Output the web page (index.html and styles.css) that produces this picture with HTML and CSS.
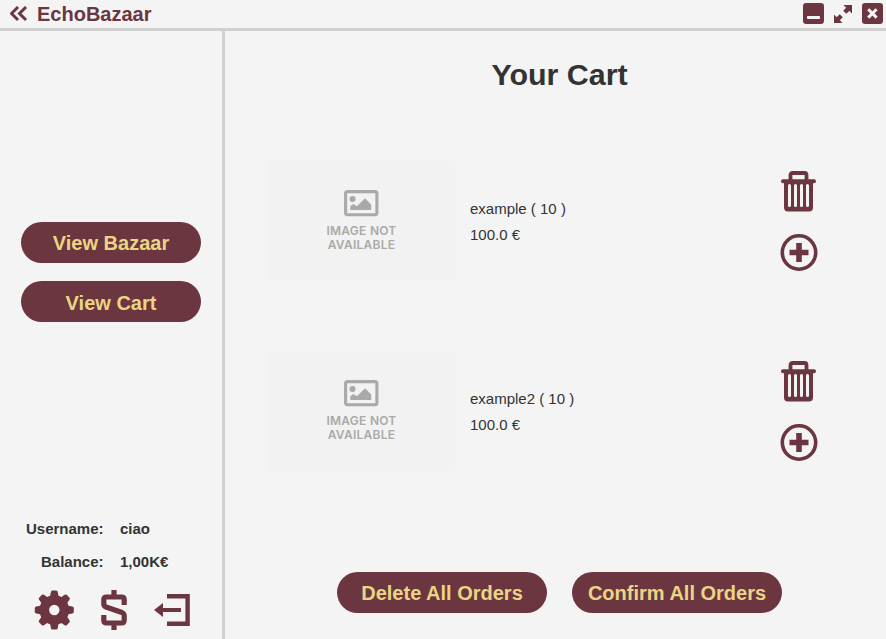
FILE: index.html
```html
<!DOCTYPE html>
<html lang="en">
<head>
<meta charset="utf-8">
<title>EchoBazaar</title>
<link rel="stylesheet" href="styles.css">
</head>
<body>
<svg width="0" height="0" class="defs">
  <symbol id="trash" viewBox="0 0 36 41">
    <path d="M9.5 9V4Q9.5 2 11.5 2H23.5Q25.5 2 25.5 4V9" fill="none" stroke="currentColor" stroke-width="3.8"/>
    <path d="M2 8.2H33Q35 8.2 35 10.2T33 12.2H32V36.5Q32 40.5 28 40.5H7Q3 40.5 3 36.5V12.2H2Q0 12.2 0 10.2T2 8.2Z" fill="currentColor"/>
    <path d="M8.5 14.5V34.5M14.5 14.5V34.5M20.5 14.5V34.5M26.5 14.5V34.5" stroke="#f4f4f4" stroke-width="3" stroke-linecap="round"/>
  </symbol>
  <symbol id="plus" viewBox="0 0 38 38">
    <circle cx="19" cy="18.5" r="16.7" fill="none" stroke="currentColor" stroke-width="3.6"/>
    <path d="M9.5 18.5H28.5M19 9V28" stroke="currentColor" stroke-width="5.6"/>
  </symbol>
  <symbol id="no-image" viewBox="0 0 35 27">
    <rect x="1.6" y="1.6" width="31.3" height="23.2" rx="2" fill="none" stroke="#a9a9a9" stroke-width="3.1"/>
    <circle cx="8.5" cy="9" r="3" fill="#a9a9a9"/>
    <path d="M6.3 20V16.3L9.3 14L13 16.3L21 8.3L27.2 14.5V20Z" fill="#a9a9a9"/>
  </symbol>
</svg>
<header class="topbar">
  <svg class="back" width="18" height="16" viewBox="0 0 18 16"><path d="M8 1L1.5 7.5L8 14M16 1L9.5 7.5L16 14" fill="none" stroke="currentColor" stroke-width="3"/></svg>
  <span class="brand">EchoBazaar</span>
  <div class="window-controls">
    <svg width="21" height="21" viewBox="0 0 21 21"><rect width="21" height="21" rx="3.2" fill="currentColor"/><rect x="4" y="13" width="13" height="3" rx=".7" fill="#f4f4f4"/></svg>
    <svg width="18" height="18" viewBox="0 0 18 18"><path d="M9.5 0H18V8.5L15.3 5.8L12.3 8.8L9.2 5.7L12.2 2.7ZM0 9.5L2.7 12.2L5.7 9.2L8.8 12.3L5.8 15.3L8.5 18H0Z" fill="currentColor"/></svg>
    <svg width="21" height="21" viewBox="0 0 21 21"><rect width="21" height="21" rx="3.2" fill="currentColor"/><path d="M6.2 6.2L14.6 14.6M14.6 6.2L6.2 14.6" stroke="#f4f4f4" stroke-width="3"/></svg>
  </div>
</header>
<div class="layout">
  <aside class="sidebar">
    <nav class="menu">
      <button class="btn">View Bazaar</button>
      <button class="btn">View Cart</button>
    </nav>
    <dl class="account">
      <dt>Username:</dt><dd>ciao</dd>
      <dt>Balance:</dt><dd>1,00K€</dd>
    </dl>
    <div class="tools">
      <svg width="40" height="40" viewBox="-20.3 -20 40 40" fill="currentColor">
        <circle r="10" fill="none" stroke="currentColor" stroke-width="9.6"/>
        <g id="teeth"><path id="tooth" d="M-4.4 -13L-3.4 -18Q-3.2 -19.5 -2 -19.5H2Q3.2 -19.5 3.4 -18L4.4 -13Z"/><use href="#tooth" transform="rotate(45)"/><use href="#tooth" transform="rotate(90)"/><use href="#tooth" transform="rotate(135)"/></g>
        <use href="#teeth" transform="rotate(180)"/>
      </svg>
      <svg width="26" height="40" viewBox="0 0 26 40"><path d="M23.2 15V9.5Q23.2 7 20.7 7H5.3Q2.8 7 2.8 9.5V14Q2.8 16 5 17L21 22.5Q23.2 23.5 23.2 26V30Q23.2 33 20.7 33H5.3Q2.8 33 2.8 30.5V25M13 0V7M13 33V40" fill="none" stroke="currentColor" stroke-width="5.2"/></svg>
      <svg width="36" height="32" viewBox="0 0 36 32"><path d="M13 2.2H33.6V29.8H13" fill="none" stroke="currentColor" stroke-width="4.4"/><path d="M0 16L9 9V14H27V18H9V23Z" fill="currentColor"/></svg>
    </div>
  </aside>
  <main class="content">
    <h1>Your Cart</h1>
    <section class="orders">
      <article class="order">
        <div class="photo"><svg width="35" height="27"><use href="#no-image"/></svg><p>IMAGE NOT</p><p>AVAILABLE</p></div>
        <div class="details"><p>example ( 10 )</p><p>100.0 €</p></div>
        <div class="actions"><svg width="36" height="41"><use href="#trash"/></svg><svg width="38" height="38"><use href="#plus"/></svg></div>
      </article>
      <article class="order">
        <div class="photo"><svg width="35" height="27"><use href="#no-image"/></svg><p>IMAGE NOT</p><p>AVAILABLE</p></div>
        <div class="details"><p>example2 ( 10 )</p><p>100.0 €</p></div>
        <div class="actions"><svg width="36" height="41"><use href="#trash"/></svg><svg width="38" height="38"><use href="#plus"/></svg></div>
      </article>
    </section>
    <footer class="cart-actions">
      <button class="btn">Delete All Orders</button>
      <button class="btn">Confirm All Orders</button>
    </footer>
  </main>
</div>
</body>
</html>
```
FILE: styles.css
```css
* { box-sizing: border-box; margin: 0; padding: 0; }
body {
  display: flex;
  flex-direction: column;
  height: 639px;
  overflow: hidden;
  background: #f4f4f4;
  color: #333;
  font: 15px "Liberation Sans", Arial, sans-serif;
}
svg { display: block; flex: none; }
.defs { position: absolute; }
.topbar {
  display: flex;
  align-items: center;
  height: 31px;
  padding: 0 3px 1px 10px;
  border-bottom: 3px solid #d0d0d0;
  color: #6b3640;
}
.brand { margin-left: 9px; padding-top: 2px; font-size: 20px; font-weight: bold; }
.window-controls { display: flex; align-items: center; gap: 10px; margin-left: auto; }
.layout { display: flex; height: 608px; }
.sidebar {
  display: flex;
  flex-direction: column;
  width: 225px;
  border-right: 3px solid #d0d0d0;
}
.menu {
  display: flex;
  flex-direction: column;
  gap: 18px;
  margin: 191px 0 0 21px;
}
.btn {
  width: 180px;
  height: 41px;
  padding-top: 1px;
  border: 0;
  border-radius: 20.5px;
  background: #6b3640;
  color: #ead585;
  font: bold 20px "Liberation Sans", Arial, sans-serif;
}
.menu .btn + .btn { padding-top: 4px; }
.account {
  display: grid;
  grid-template-columns: 77.5px 1fr;
  grid-auto-rows: 33px;
  column-gap: 16.5px;
  align-items: center;
  margin: 190px 0 0 26px;
  font-weight: bold;
}
.account dt { text-align: right; }
.tools {
  display: flex;
  align-items: center;
  margin: 11.5px 0 0 34px;
  gap: 27px;
  color: #6b3640;
}
.content { display: flex; flex: 1; flex-direction: column; }
h1 { margin: 26px 0 0; padding-left: 8px; font-size: 30.4px; line-height: 35px; text-align: center; }
.orders { display: grid; gap: 70px; margin: 69px 68px 0 42px; }
.order { display: flex; align-items: flex-start; height: 120px; }
.photo {
  display: flex;
  flex-direction: column;
  align-items: center;
  width: 188px;
  height: 120px;
  padding: 28.5px 0 0 1px;
  background: #f2f2f2;
  color: #a9a9a9;
  font: 600 12px/14.5px Inter, Lato, sans-serif;
  letter-spacing: .25px;
}
.photo svg { margin-bottom: 7px; }
.details { margin: 35px 0 0 15px; line-height: 26px; }
.actions {
  display: flex;
  flex-direction: column;
  align-items: center;
  gap: 21.5px;
  margin: 10px 0 0 auto;
  color: #6b3640;
}
.cart-actions { display: flex; gap: 25px; margin: 101px 0 0 112px; }
.cart-actions .btn { width: 210px; }
```
